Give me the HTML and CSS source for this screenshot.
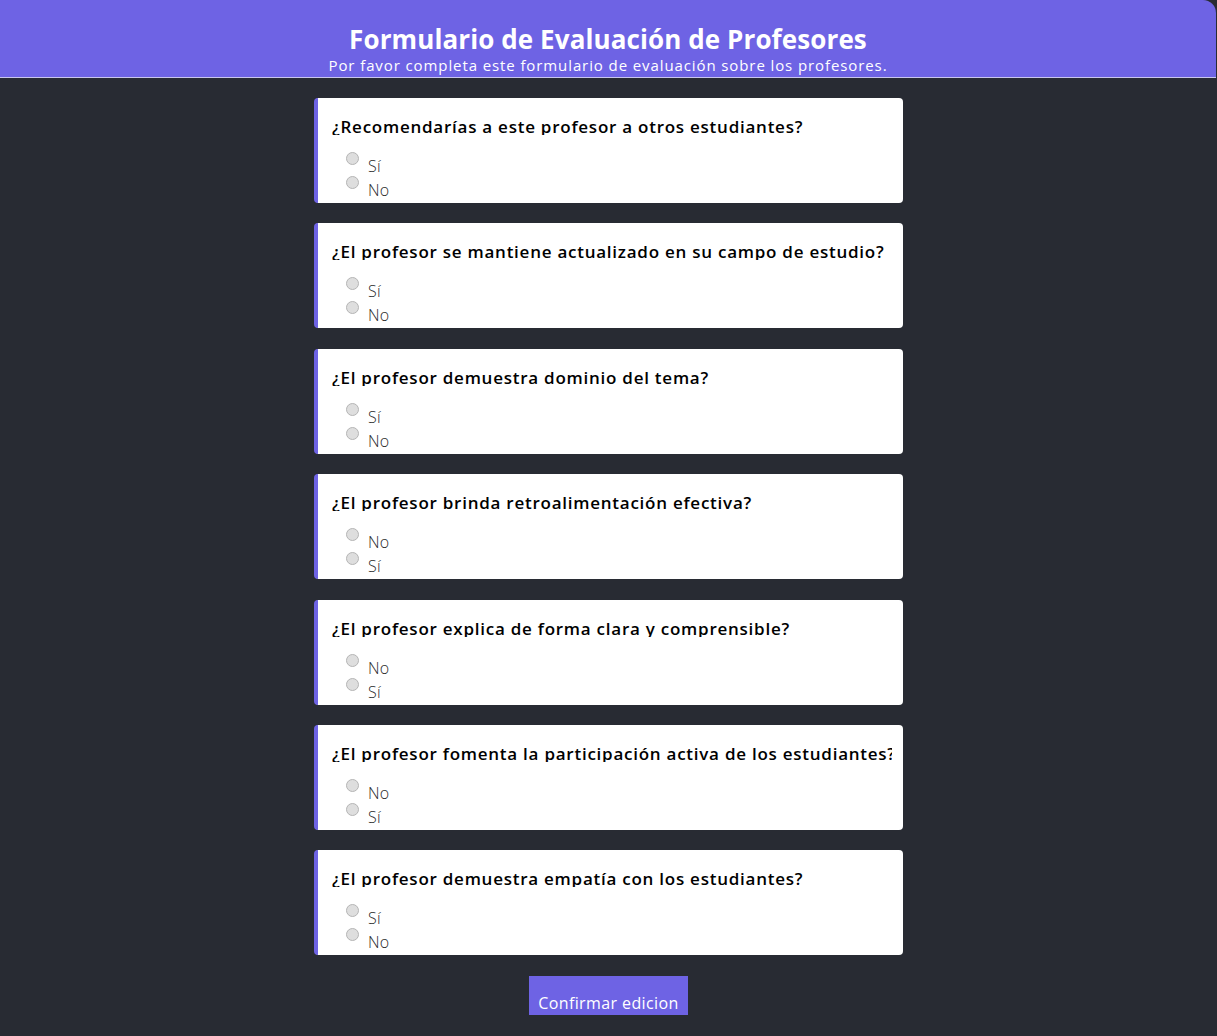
FILE: index.html
```html
<!DOCTYPE html>
<html lang="es">
<head>
<meta charset="utf-8">
<title>Formulario de Evaluación de Profesores</title>
<link rel="stylesheet" href="styles.css">
</head>
<body>
<header class="top">
  <h1 class="top-title">Formulario de Evaluación de Profesores</h1>
  <p class="top-sub">Por favor completa este formulario de evaluación sobre los profesores.</p>
</header>
<main class="form">
  <section class="card">
    <h2 class="q">¿Recomendarías a este profesor a otros estudiantes?</h2>
    <label class="opt"><input type="radio" name="q1" class="radio"><span class="opt-text">Sí</span></label>
    <label class="opt"><input type="radio" name="q1" class="radio"><span class="opt-text">No</span></label>
  </section>
  <section class="card">
    <h2 class="q">¿El profesor se mantiene actualizado en su campo de estudio?</h2>
    <label class="opt"><input type="radio" name="q2" class="radio"><span class="opt-text">Sí</span></label>
    <label class="opt"><input type="radio" name="q2" class="radio"><span class="opt-text">No</span></label>
  </section>
  <section class="card">
    <h2 class="q">¿El profesor demuestra dominio del tema?</h2>
    <label class="opt"><input type="radio" name="q3" class="radio"><span class="opt-text">Sí</span></label>
    <label class="opt"><input type="radio" name="q3" class="radio"><span class="opt-text">No</span></label>
  </section>
  <section class="card">
    <h2 class="q">¿El profesor brinda retroalimentación efectiva?</h2>
    <label class="opt"><input type="radio" name="q4" class="radio"><span class="opt-text">No</span></label>
    <label class="opt"><input type="radio" name="q4" class="radio"><span class="opt-text">Sí</span></label>
  </section>
  <section class="card">
    <h2 class="q">¿El profesor explica de forma clara y comprensible?</h2>
    <label class="opt"><input type="radio" name="q5" class="radio"><span class="opt-text">No</span></label>
    <label class="opt"><input type="radio" name="q5" class="radio"><span class="opt-text">Sí</span></label>
  </section>
  <section class="card">
    <h2 class="q">¿El profesor fomenta la participación activa de los estudiantes?</h2>
    <label class="opt"><input type="radio" name="q6" class="radio"><span class="opt-text">No</span></label>
    <label class="opt"><input type="radio" name="q6" class="radio"><span class="opt-text">Sí</span></label>
  </section>
  <section class="card">
    <h2 class="q">¿El profesor demuestra empatía con los estudiantes?</h2>
    <label class="opt"><input type="radio" name="q7" class="radio"><span class="opt-text">Sí</span></label>
    <label class="opt"><input type="radio" name="q7" class="radio"><span class="opt-text">No</span></label>
  </section>
  <button class="submit" type="button">Confirmar edicion</button>
</main>
</body>
</html>
```

FILE: styles.css
```css
* { box-sizing: border-box; }
html, body { margin: 0; padding: 0; }
body {
  background: #282b33;
  font-family: "Open Sans", "Liberation Sans", sans-serif;
  color: #000;
  height: 1036px;
  overflow: hidden;
}
.top {
  width: 1216px;
  height: 78px;
  background: #6e63e4;
  border-top-right-radius: 13px;
  border-bottom: 1px solid #c9c6ee;
  text-align: center;
  color: #fff;
  padding-top: 24px;
}
.top-title {
  margin: 0;
  font-size: 26px;
  font-weight: 700;
  line-height: 30px;
  letter-spacing: 0.1px;
}
.top-sub {
  margin: 2px 0 0;
  font-size: 15px;
  font-weight: 400;
  line-height: 18px;
  letter-spacing: 0.9px;
}
.form {
  width: 589px;
  margin: 20px auto 0;
  display: flex;
  flex-direction: column;
  align-items: stretch;
  gap: 20.4px;
}
.card {
  background: #fff;
  border-left: 4px solid #6e63e4;
  border-radius: 4px;
  height: 105px;
  padding: 19px 11px 0 14px;
  overflow: hidden;
}
.q {
  margin: 0 0 17px;
  font-size: 17px;
  font-weight: 600;
  line-height: 20px;
  height: 18px;
  letter-spacing: 0.75px;
  white-space: nowrap;
  overflow: hidden;
}
.opt {
  display: flex;
  align-items: flex-start;
  height: 24px;
  padding-left: 14px;
}
.radio {
  appearance: none;
  -webkit-appearance: none;
  width: 13px;
  height: 13px;
  margin: 0 9px 0 0;
  border: 1px solid #b5b5b5;
  border-radius: 50%;
  background: #dedede;
}
.opt-text {
  margin-top: 7px;
  font-size: 16px;
  font-weight: 300;
  line-height: 15px;
  letter-spacing: 0.3px;
  color: #2a2a2a;
}
.submit {
  align-self: center;
  width: 159px;
  height: 39px;
  border: none;
  border-radius: 0;
  background: #6e63e4;
  color: #fff;
  font-family: "Open Sans", "Liberation Sans", sans-serif;
  font-size: 16px;
  letter-spacing: 0.4px;
  padding: 15px 0 0;
  line-height: 22px;
}
```
